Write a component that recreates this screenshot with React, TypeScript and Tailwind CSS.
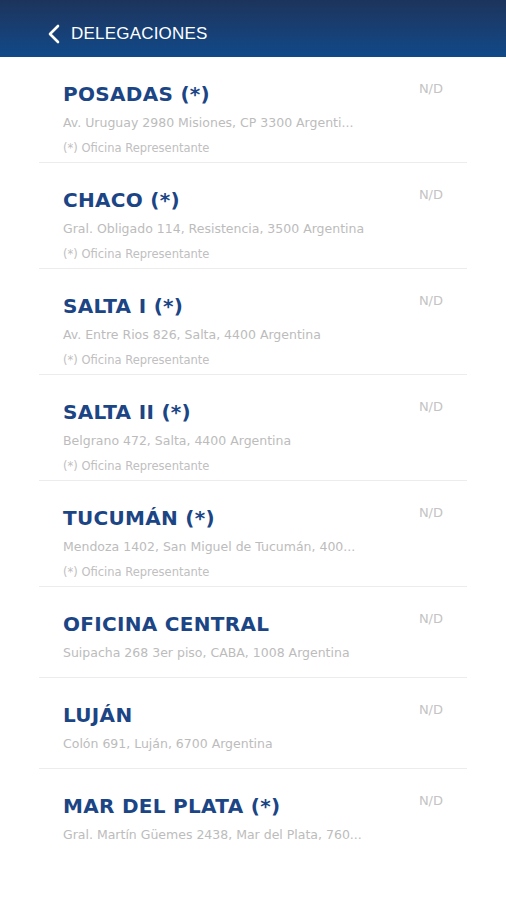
import React from 'react';

interface Delegacion {
  name: string;
  address: string;
  representante: boolean;
}

// the last row shows only the address in the capture
const delegaciones: Delegacion[] = [
  { name: 'POSADAS (*)', address: 'Av. Uruguay 2980 Misiones, CP 3300 Argenti...', representante: true },
  { name: 'CHACO (*)', address: 'Gral. Obligado 114, Resistencia, 3500 Argentina', representante: true },
  { name: 'SALTA I (*)', address: 'Av. Entre Rios 826, Salta, 4400 Argentina', representante: true },
  { name: 'SALTA II (*)', address: 'Belgrano 472, Salta, 4400 Argentina', representante: true },
  { name: 'TUCUMÁN (*)', address: 'Mendoza 1402, San Miguel de Tucumán, 400...', representante: true },
  { name: 'OFICINA CENTRAL', address: 'Suipacha 268 3er piso, CABA, 1008 Argentina', representante: false },
  { name: 'LUJÁN', address: 'Colón 691, Luján, 6700 Argentina', representante: false },
  { name: 'MAR DEL PLATA (*)', address: 'Gral. Martín Güemes 2438, Mar del Plata, 760...', representante: false },
];

const ChevronLeft: React.FC = () => (
  <svg width="14" height="20" viewBox="0 0 14 20" fill="none">
    <path d="M11 2 L3 10 L11 18" stroke="white" strokeWidth="2.6" strokeLinecap="round" strokeLinejoin="round" />
  </svg>
);

const DelegacionRow: React.FC<{ item: Delegacion; last: boolean }> = ({ item, last }) => (
  <div className={`flex pl-[24px] pr-[24px] pt-[25px] ${item.representante ? 'pb-[5px]' : 'pb-[15px]'} ${last ? '' : 'border-b border-[#ececec]'}`}>
    <div className="flex-1 min-w-0">
      <div className="text-[20px] leading-[24px] font-semibold text-[#1b4585] tracking-[0.3px]">{item.name}</div>
      <div className="mt-[8px] text-[12.5px] leading-[18px] text-[#bcbcbc] truncate">{item.address}</div>
      {item.representante && (
        <div className="mt-[7px] text-[11.5px] leading-[18px] text-[#c0c0c0]">(*) Oficina Representante</div>
      )}
    </div>
    <div className="text-[13px] leading-[18px] text-[#c4c4c4] -mt-[2px]">N/D</div>
  </div>
);

const App: React.FC = () => {
  return (
    <div className="w-[506px] h-[900px] bg-white overflow-hidden" style={{ fontFamily: '"DejaVu Sans", sans-serif' }}>
      <div className="h-[57px] bg-gradient-to-b from-[#1c345c] to-[#0f4989] flex items-center pl-[47px] pt-[10px]">
        <ChevronLeft />
        <span className="ml-[10px] text-[17px] text-white tracking-[0.2px]" style={{ fontFamily: '"Liberation Sans", Arial, sans-serif' }}>
          DELEGACIONES
        </span>
      </div>
      <div className="mx-[39px]">
        {delegaciones.map((d, i) => (
          <DelegacionRow key={d.name} item={d} last={i === delegaciones.length - 1} />
        ))}
      </div>
    </div>
  );
};

export default App;
